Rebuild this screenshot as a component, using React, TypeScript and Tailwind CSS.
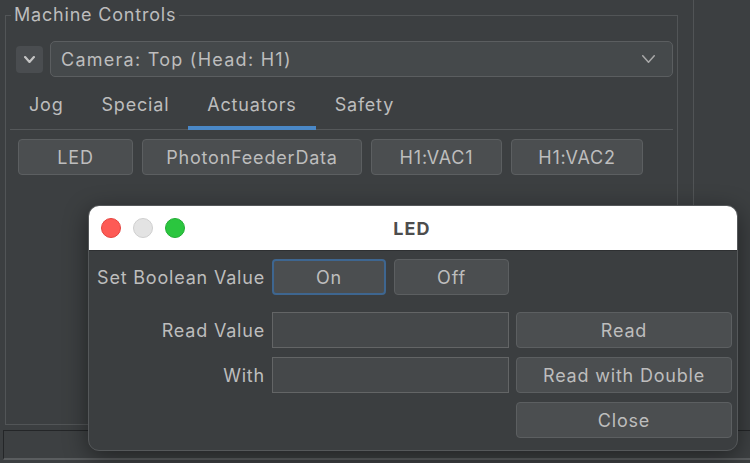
import React from "react";

const font = { fontFamily: "Inter, 'Noto Sans', 'DejaVu Sans', sans-serif" };

function Chevron({ w, h, sw, color = "#b9b9b9" }: { w: number; h: number; sw: number; color?: string }) {
  return (
    <svg width={w} height={h} viewBox={`0 0 ${w} ${h}`} fill="none">
      <polyline
        points={`${sw / 2},${sw / 2} ${w / 2},${h - sw / 2} ${w - sw / 2},${sw / 2}`}
        stroke={color}
        strokeWidth={sw}
        strokeLinecap="round"
        strokeLinejoin="round"
      />
    </svg>
  );
}

function Btn({ label, className = "" }: { label: string; className?: string }) {
  return (
    <div
      className={`flex h-[36px] items-center justify-center rounded-[4px] border border-[#5c5f61] bg-[#4b4e50] text-[18px] text-[#bdbdbd] ${className}`}
    >
      {label}
    </div>
  );
}

const tabs = ["Jog", "Special", "Actuators", "Safety"];

function LedDialog() {
  return (
    <div className="absolute left-[88px] top-[205px] flex h-[246px] w-[650px] flex-col overflow-hidden rounded-[11px] border border-[#55585a] bg-[#3b3e40] shadow-[0_6px_24px_rgba(0,0,0,0.45)]">
      <div className="relative flex h-[45px] shrink-0 items-center border-b border-[#2e3032] bg-white">
        <div className="ml-[12px] flex gap-[12px]">
          <span className="h-[20px] w-[20px] rounded-full border border-[#e5443f] bg-[#fd5a55]" />
          <span className="h-[20px] w-[20px] rounded-full border border-[#cfcfcf] bg-[#e3e3e3]" />
          <span className="h-[20px] w-[20px] rounded-full border border-[#22ad35] bg-[#2bc63f]" />
        </div>
        <div className="flex-1 pr-[98px] text-center text-[18px] font-bold tracking-[0.06em] text-[#4d4d4d]">LED</div>
      </div>
      <div className="flex flex-col pl-[4px] text-[18px] text-[#bdbdbd]">
        <div className="mt-[8px] flex h-[36px] items-center gap-[7px]">
          <div className="w-[172px] text-right whitespace-nowrap">Set Boolean Value</div>
          <div className="flex w-[237px] gap-[8px]">
            <div className="flex h-[36px] w-[114px] items-center justify-center rounded-[4px] border-2 border-[#3e6690] bg-[#4b4e50]">
              On
            </div>
            <Btn label="Off" className="w-[115px]" />
          </div>
        </div>
        <div className="mt-[17px] flex h-[36px] items-center gap-[7px]">
          <div className="w-[172px] text-right">Read Value</div>
          <div className="h-[36px] w-[237px] border border-[#636566] bg-[#45484a]" />
          <Btn label="Read" className="w-[216px]" />
        </div>
        <div className="mt-[9px] flex h-[36px] items-center gap-[7px]">
          <div className="w-[172px] text-right">With</div>
          <div className="h-[36px] w-[237px] border border-[#636566] bg-[#45484a]" />
          <Btn label="Read with Double" className="w-[216px]" />
        </div>
        <div className="mt-[9px] flex h-[36px] items-center gap-[7px]">
          <div className="w-[172px]" />
          <div className="w-[237px]" />
          <Btn label="Close" className="w-[216px]" />
        </div>
      </div>
    </div>
  );
}

export default function App() {
  return (
    <div
      className="relative flex h-[463px] w-[750px] flex-col overflow-hidden bg-[#3c3f41] tracking-[0.05em] text-[#bdbdbd]"
      style={font}
    >
      <div className="flex h-[430px] shrink-0">
        <div className="w-[694px] shrink-0 border-r border-[#515456] pl-[5px]">
          <fieldset className="mt-[4px] h-[421px] w-[673px] border border-[#525557] px-[4px]">
            <legend className="ml-[1px] px-[3px] text-[18px] leading-[22px] text-[#bdbdbd]">
              Machine Controls
            </legend>
            <div className="mt-[15px] flex h-[36px] items-center">
              <div className="ml-[6px] flex h-[27px] w-[27px] items-center justify-center rounded-[4px] bg-[#4a4d50]">
                <Chevron w={11} h={7} sw={2.2} color="#c4c4c4" />
              </div>
              <div className="ml-[7px] flex h-[36px] flex-1 items-center justify-between rounded-[5px] border border-[#5b5e60] bg-[#45494b] pl-[10px] pr-[17px] text-[18px] tracking-[0.07em]">
                <span>Camera: Top (Head: H1)</span>
                <Chevron w={13} h={8} sw={1.5} color="#a9a9a9" />
              </div>
            </div>
            <div className="mt-[6px] flex border-b border-[#55585a]">
              {tabs.map((t) => (
                <div
                  key={t}
                  className={`-mb-px flex h-[47px] items-center border-b-4 px-[19px] text-[18px] ${
                    t === "Actuators" ? "border-[#4a88c7]" : "border-transparent"
                  }`}
                >
                  {t}
                </div>
              ))}
            </div>
            <div className="ml-[8px] mt-[9px] flex gap-[9px]">
              <Btn label="LED" className="w-[115px]" />
              <Btn label="PhotonFeederData" className="w-[220px]" />
              <Btn label="H1:VAC1" className="w-[131px]" />
              <Btn label="H1:VAC2" className="w-[132px]" />
            </div>
          </fieldset>
        </div>
        <div className="flex-1" />
      </div>
      <div className="flex-1 pl-[3px]">
        <div className="h-[30px] border-l border-t border-b-2 border-l-[#242628] border-t-[#242628] border-b-[#5a5d5f] bg-[#3d4042]" />
      </div>
      <LedDialog />
    </div>
  );
}
